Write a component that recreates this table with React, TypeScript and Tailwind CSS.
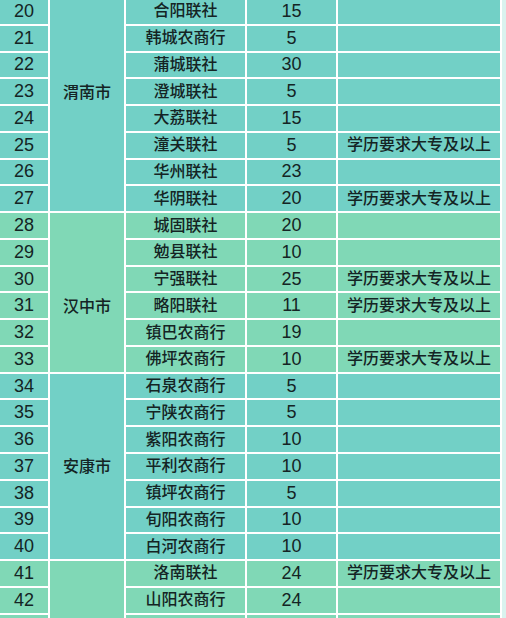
const TEAL = "bg-[#72d0c6]";
const GREEN = "bg-[#80d8b6]";

const NOTE = "学历要求大专及以上";

// [no, branch, count, note, group]
const ROWS: [number, string, number, string, number][] = [
  [20, "合阳联社", 15, "", 0],
  [21, "韩城农商行", 5, "", 0],
  [22, "蒲城联社", 30, "", 0],
  [23, "澄城联社", 5, "", 0],
  [24, "大荔联社", 15, "", 0],
  [25, "潼关联社", 5, NOTE, 0],
  [26, "华州联社", 23, "", 0],
  [27, "华阴联社", 20, NOTE, 0],
  [28, "城固联社", 20, "", 1],
  [29, "勉县联社", 10, "", 1],
  [30, "宁强联社", 25, NOTE, 1],
  [31, "略阳联社", 11, NOTE, 1],
  [32, "镇巴农商行", 19, "", 1],
  [33, "佛坪农商行", 10, NOTE, 1],
  [34, "石泉农商行", 5, "", 2],
  [35, "宁陕农商行", 5, "", 2],
  [36, "紫阳农商行", 10, "", 2],
  [37, "平利农商行", 10, "", 2],
  [38, "镇坪农商行", 5, "", 2],
  [39, "旬阳农商行", 10, "", 2],
  [40, "白河农商行", 10, "", 2],
  [41, "洛南联社", 24, NOTE, 3],
  [42, "山阳农商行", 24, "", 3],
  [0, "", 0, "", 3], // next row, only its top edge shows
];

// city name shown on one row of its group
const CITY: Record<number, string> = { 23: "渭南市", 31: "汉中市", 37: "安康市" };

export default function App() {
  return (
    <div
      className="w-[506px] h-[618px] overflow-hidden bg-[#d9f3ef] text-[#142424]"
      style={{ fontFamily: '"Liberation Sans", "Noto Sans CJK SC", sans-serif' }}
    >
      <div className="-mt-[1px] w-[502px]">
        {ROWS.map(([no, name, count, note, group], i) => {
          const bg = group % 2 === 0 ? TEAL : GREEN;
          const next = ROWS[i + 1];
          const groupEnd = !next || next[4] !== group;
          const cell = `h-full flex items-center justify-center border-r-2 border-white ${bg}`;
          return (
            <div key={i} className="flex h-[26.77px]">
              <div className={`${cell} w-[50px] border-b-2 text-[18px]`}>{no || ""}</div>
              <div className={`${cell} w-[76px] text-[16px] font-medium ${groupEnd ? "border-b-2" : ""}`}>
                {CITY[no] ?? ""}
              </div>
              <div className={`${cell} w-[121px] border-b-2 text-[16px] font-medium`}>{name}</div>
              <div className={`${cell} w-[91px] border-b-2 text-[18px]`}>{count || ""}</div>
              <div className={`${cell} w-[164px] border-b-2 text-[16px] font-medium`}>{note}</div>
            </div>
          );
        })}
      </div>
    </div>
  );
}
